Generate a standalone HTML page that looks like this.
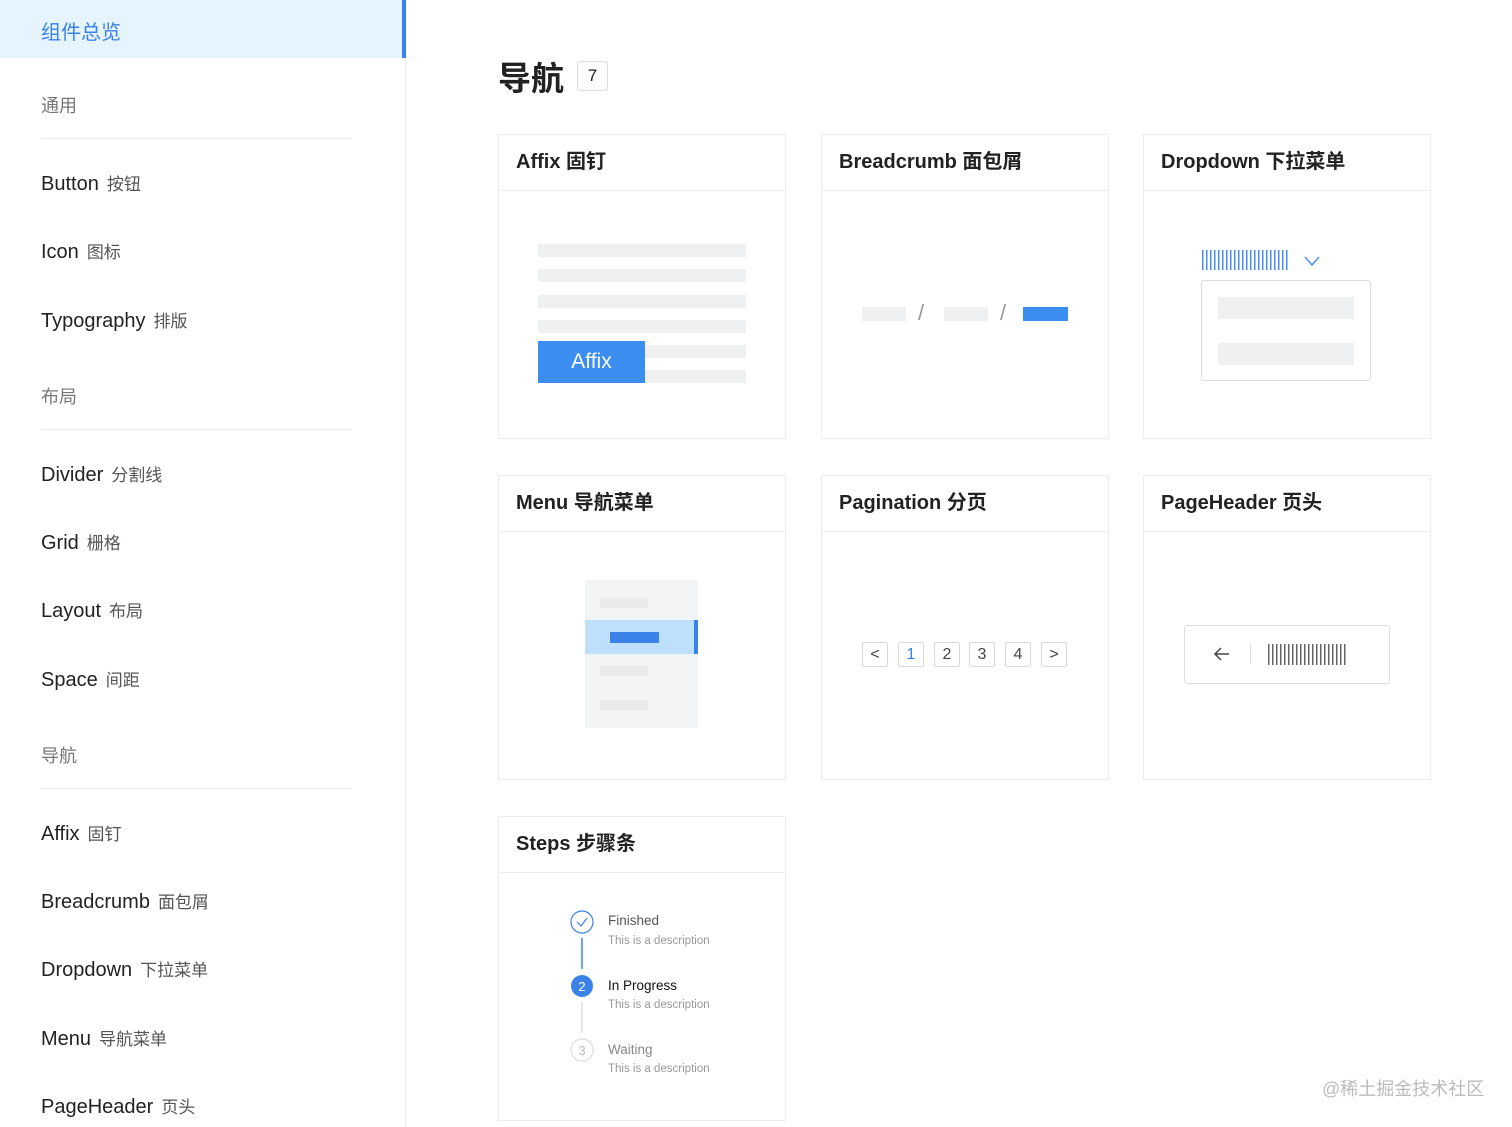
<!DOCTYPE html>
<html><head><meta charset="utf-8"><style>
*{margin:0;padding:0;box-sizing:border-box}
body{width:1512px;height:1127px;overflow:hidden;background:#fff;font-family:"Liberation Sans","Noto Sans CJK SC",sans-serif;position:relative;color:#222}
.a{position:absolute}
.side{left:0;top:0;width:406px;height:1127px;border-right:1px solid #ececec}
.it{position:absolute;left:41px;font-size:20px;color:#222;line-height:24px}
.it span{font-size:17px;color:#555;margin-left:8px}
.grp{position:absolute;left:41px;font-size:18px;color:#777;line-height:24px}
.hr{position:absolute;left:41px;width:311px;height:1px;background:#e8e8e8}
.card{position:absolute;width:288px;height:305px;border:1px solid #ececec;background:#fff}
.card .h{height:56px;border-bottom:1px solid #ececec;padding-left:17px;font-size:20px;font-weight:bold;line-height:55px;color:#222}
.g{position:absolute;background:#eff0f1}
.pg{position:absolute;top:642px;width:26px;height:25px;border:1px solid #d9d9d9;border-radius:2px;font-size:16px;text-align:center;line-height:23px;color:#444}
.bar{background:repeating-linear-gradient(90deg,#4a8ff0 0 1.5px,transparent 1.5px 4px)}
.barg{background:repeating-linear-gradient(90deg,#666 0 1.5px,transparent 1.5px 4px)}
</style></head><body>
<div class="a side">
<div class="a" style="left:0;top:0;width:402px;height:58px;background:#e6f4ff"></div>
<div class="a" style="left:402px;top:0;width:4px;height:58px;background:#3b82e8"></div>
<div class="a" style="left:41px;top:16px;font-size:20px;color:#3b82e8">组件总览</div>
<div class="grp" style="top:94px">通用</div><div class="hr" style="top:138px"></div>
<div class="it" style="top:172px">Button<span>按钮</span></div>
<div class="it" style="top:240px">Icon<span>图标</span></div>
<div class="it" style="top:309px">Typography<span>排版</span></div>
<div class="grp" style="top:385px">布局</div><div class="hr" style="top:429px"></div>
<div class="it" style="top:463px">Divider<span>分割线</span></div>
<div class="it" style="top:531px">Grid<span>栅格</span></div>
<div class="it" style="top:599px">Layout<span>布局</span></div>
<div class="it" style="top:668px">Space<span>间距</span></div>
<div class="grp" style="top:744px">导航</div><div class="hr" style="top:788px"></div>
<div class="it" style="top:822px">Affix<span>固钉</span></div>
<div class="it" style="top:890px">Breadcrumb<span>面包屑</span></div>
<div class="it" style="top:958px">Dropdown<span>下拉菜单</span></div>
<div class="it" style="top:1027px">Menu<span>导航菜单</span></div>
<div class="it" style="top:1095px">PageHeader<span>页头</span></div>
</div>

<div class="a" style="left:498px;top:52px;font-size:33px;font-weight:bold;color:#222">导航</div>
<div class="a" style="left:577px;top:61px;width:31px;height:30px;border:1px solid #ddd;border-radius:3px;background:#fafbfc;font-size:17px;text-align:center;line-height:28px">7</div>

<div class="card" style="left:498px;top:134px"><div class="h">Affix 固钉</div></div>
<div class="card" style="left:821px;top:134px"><div class="h">Breadcrumb 面包屑</div></div>
<div class="card" style="left:1143px;top:134px"><div class="h">Dropdown 下拉菜单</div></div>
<div class="card" style="left:498px;top:475px"><div class="h">Menu 导航菜单</div></div>
<div class="card" style="left:821px;top:475px"><div class="h">Pagination 分页</div></div>
<div class="card" style="left:1143px;top:475px"><div class="h">PageHeader 页头</div></div>
<div class="card" style="left:498px;top:816px"><div class="h">Steps 步骤条</div></div>

<div class="g" style="left:538px;top:244px;width:208px;height:13px"></div>
<div class="g" style="left:538px;top:269px;width:208px;height:13px"></div>
<div class="g" style="left:538px;top:295px;width:208px;height:13px"></div>
<div class="g" style="left:538px;top:320px;width:208px;height:13px"></div>
<div class="g" style="left:645px;top:345px;width:101px;height:13px"></div>
<div class="g" style="left:645px;top:370px;width:101px;height:13px"></div>
<div class="a" style="left:538px;top:341px;width:107px;height:42px;background:#3b8ef0;color:#fff;font-size:21px;text-align:center;line-height:42px">Affix</div>

<div class="g" style="left:862px;top:307px;width:44px;height:14px"></div>
<div class="a" style="left:918px;top:300px;font-size:22px;color:#999">/</div>
<div class="g" style="left:944px;top:307px;width:44px;height:14px"></div>
<div class="a" style="left:1000px;top:300px;font-size:22px;color:#999">/</div>
<div class="a" style="left:1023px;top:307px;width:45px;height:14px;background:#3b8ef0"></div>

<div class="a bar" style="left:1202px;top:250px;width:88px;height:20px"></div>
<svg class="a" style="left:1304px;top:255px" width="16" height="12"><path d="M1 2 L8 10 L15 2" fill="none" stroke="#4a8ff0" stroke-width="1.5"/></svg>
<div class="a" style="left:1201px;top:280px;width:170px;height:101px;border:1px solid #ddd;border-radius:3px"></div>
<div class="g" style="left:1218px;top:297px;width:136px;height:22px"></div>
<div class="g" style="left:1218px;top:343px;width:136px;height:22px"></div>

<div class="a" style="left:585px;top:580px;width:113px;height:148px;background:#f3f4f5"></div>
<div class="g" style="left:600px;top:598px;width:48px;height:10px;background:#e8e9ea"></div>
<div class="a" style="left:585px;top:620px;width:113px;height:34px;background:#bfe0fd"></div>
<div class="a" style="left:694px;top:620px;width:4px;height:34px;background:#3b82e8"></div>
<div class="a" style="left:610px;top:632px;width:49px;height:11px;background:#3b82e8"></div>
<div class="g" style="left:600px;top:666px;width:48px;height:10px;background:#e8e9ea"></div>
<div class="g" style="left:600px;top:700px;width:48px;height:10px;background:#e8e9ea"></div>

<div class="pg" style="left:862px">&lt;</div>
<div class="pg" style="left:898px;color:#3b82e8">1</div>
<div class="pg" style="left:934px">2</div>
<div class="pg" style="left:969px">3</div>
<div class="pg" style="left:1005px">4</div>
<div class="pg" style="left:1041px">&gt;</div>

<div class="a" style="left:1184px;top:625px;width:206px;height:59px;border:1px solid #ddd;border-radius:3px"></div>
<svg class="a" style="left:1213px;top:645px" width="18" height="18"><path d="M16 9 H2 M8 3 L2 9 L8 15" fill="none" stroke="#444" stroke-width="1.5"/></svg>
<div class="a" style="left:1250px;top:644px;width:1px;height:20px;background:#ddd"></div>
<div class="a barg" style="left:1268px;top:644px;width:78px;height:21px"></div>

<svg class="a" style="left:569px;top:909px" width="28" height="180">
<circle cx="13" cy="13" r="11" fill="none" stroke="#3b82e8" stroke-width="1.2"/>
<path d="M8 13 L12 17 L18 9" fill="none" stroke="#3b82e8" stroke-width="1.2"/>
<line x1="13" y1="29" x2="13" y2="60" stroke="#3b82e8" stroke-width="1.5"/>
<circle cx="13" cy="77" r="11" fill="#3b82e8"/>
<text x="13" y="82" font-size="13" fill="#fff" text-anchor="middle" font-family="Liberation Sans">2</text>
<line x1="13" y1="93" x2="13" y2="124" stroke="#ddd" stroke-width="1.5"/>
<circle cx="13" cy="141" r="11" fill="none" stroke="#ddd" stroke-width="1.2"/>
<text x="13" y="146" font-size="13" fill="#bbb" text-anchor="middle" font-family="Liberation Sans">3</text>
</svg>
<div class="a" style="left:608px;top:913px;font-size:13.5px;color:#555">Finished</div>
<div class="a" style="left:608px;top:935px;font-size:11.5px;color:#999">This is a description</div>
<div class="a" style="left:608px;top:978px;font-size:13.5px;color:#111">In Progress</div>
<div class="a" style="left:608px;top:999px;font-size:11.5px;color:#999">This is a description</div>
<div class="a" style="left:608px;top:1042px;font-size:13.5px;color:#888">Waiting</div>
<div class="a" style="left:608px;top:1063px;font-size:11.5px;color:#999">This is a description</div>

<div class="a" style="left:1322px;top:1075px;font-size:18px;color:#bbb">@稀土掘金技术社区</div>
</body></html>
